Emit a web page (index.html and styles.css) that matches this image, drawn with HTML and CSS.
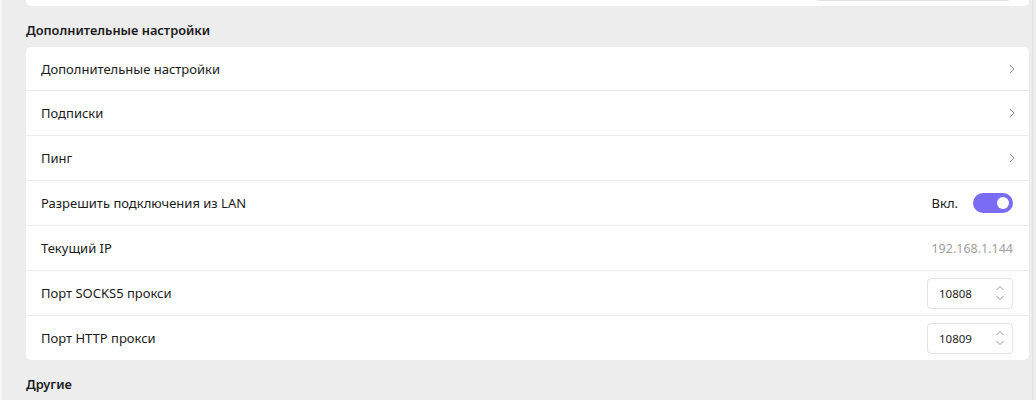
FILE: index.html
```html
<!DOCTYPE html>
<html lang="ru">
<head>
<meta charset="utf-8">
<link rel="stylesheet" href="styles.css">
</head>
<body>
<div class="page">
  <div class="main">
    <div class="card top-card">
      <div class="top-input"></div>
    </div>
    <h3 class="section-title">Дополнительные настройки</h3>
    <div class="card">
      <div class="row">
        <span class="label">Дополнительные настройки</span>
        <svg class="chev" width="8" height="10" viewBox="0 0 8 10"><path d="M2 1l4 4-4 4" fill="none" stroke="#8a8a8a" stroke-width="1"/></svg>
      </div>
      <div class="row">
        <span class="label">Подписки</span>
        <svg class="chev" width="8" height="10" viewBox="0 0 8 10"><path d="M2 1l4 4-4 4" fill="none" stroke="#8a8a8a" stroke-width="1"/></svg>
      </div>
      <div class="row">
        <span class="label">Пинг</span>
        <svg class="chev" width="8" height="10" viewBox="0 0 8 10"><path d="M2 1l4 4-4 4" fill="none" stroke="#8a8a8a" stroke-width="1"/></svg>
      </div>
      <div class="row">
        <span class="label">Разрешить подключения из LAN</span>
        <div class="toggle-wrap">
          <span class="toggle-text">Вкл.</span>
          <span class="toggle"><span class="knob"></span></span>
        </div>
      </div>
      <div class="row">
        <span class="label">Текущий IP</span>
        <span class="muted">192.168.1.144</span>
      </div>
      <div class="row">
        <span class="label">Порт SOCKS5 прокси</span>
        <div class="num">
          <span class="num-val">10808</span>
          <svg class="spin" width="10" height="18" viewBox="0 0 10 18"><path d="M1.5 6l3.5-3.5 3.5 3.5M1.5 12l3.5 3.5 3.5-3.5" fill="none" stroke="#9a9a9a" stroke-width="1"/></svg>
        </div>
      </div>
      <div class="row">
        <span class="label">Порт HTTP прокси</span>
        <div class="num">
          <span class="num-val">10809</span>
          <svg class="spin" width="10" height="18" viewBox="0 0 10 18"><path d="M1.5 6l3.5-3.5 3.5 3.5M1.5 12l3.5 3.5 3.5-3.5" fill="none" stroke="#9a9a9a" stroke-width="1"/></svg>
        </div>
      </div>
    </div>
    <h3 class="section-title">Другие</h3>
  </div>
  <div class="scrollbar"></div>
</div>
</body>
</html>
```

FILE: styles.css
```css
* { box-sizing: border-box; }
html, body {
  margin: 0;
  padding: 0;
  height: 400px;
  overflow: hidden;
  background: #ededed;
  font-family: "Noto Sans", "Segoe UI", sans-serif;
  color: #1a1a1a;
}
.page {
  display: flex;
  height: 400px;
  border-left: 2px solid #f6f6f6;
}
.main {
  flex: 1;
  padding: 0 0 0 24px;
  margin-top: -40px;
}
.card {
  background: #fff;
  border-radius: 5px;
}
.top-card {
  height: 46px;
  position: relative;
}
.top-input {
  position: absolute;
  right: 18px;
  bottom: 5px;
  width: 196px;
  height: 30px;
  border: 1px solid #e3e3e3;
  border-radius: 4px;
}
.section-title {
  margin: 0;
  font-size: 12.8px;
  font-weight: 600;
  height: 41px;
  line-height: 46px;
}
.card + .section-title { line-height: 48px; }
.row {
  height: 45px;
  display: flex;
  align-items: center;
  justify-content: space-between;
  padding: 0 16px 0 15px;
  border-bottom: 1px solid #ececec;
  font-size: 13px;
}
.row:first-child { height: 44px; }
.row:last-child { border-bottom: none; height: 44px; }
.chev { margin-right: -3px; }
.toggle-wrap {
  display: flex;
  align-items: center;
  gap: 15px;
}
.toggle-text { font-size: 13px; }
.toggle {
  width: 40px;
  height: 20px;
  border-radius: 10px;
  background: #7a6cf5;
  display: flex;
  align-items: center;
  justify-content: flex-end;
  padding-right: 4px;
}
.knob {
  width: 12px;
  height: 12px;
  border-radius: 50%;
  background: #fff;
}
.muted {
  color: #a0a0a0;
  font-size: 12.5px;
}
.num {
  width: 86px;
  height: 31px;
  border: 1px solid #e4e4e4;
  border-radius: 4px;
  display: flex;
  align-items: center;
  justify-content: space-between;
  padding: 0 7px 0 11px;
  font-size: 11.5px;
  color: #222;
}
.scrollbar {
  width: 4px;
  border-left: 1px solid #e2e2e2;
  margin-left: 3px;
  background: #ededed;
}
```
